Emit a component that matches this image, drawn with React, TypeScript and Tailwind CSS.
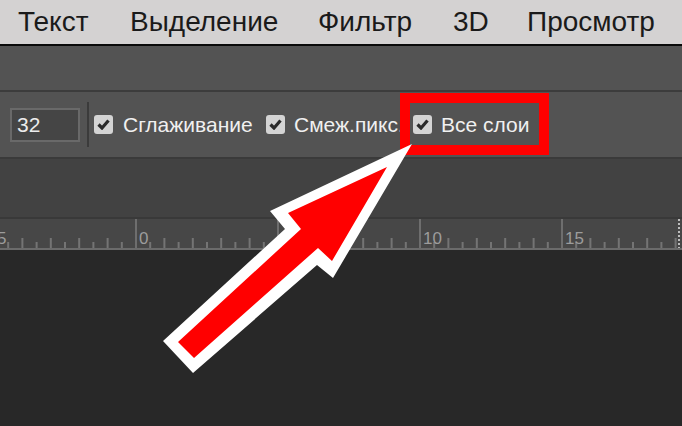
import React from 'react';

const menu = [
  { label: 'Текст', w: 'w-[112px]' },
  { label: 'Выделение', w: 'w-[188px]' },
  { label: 'Фильтр', w: 'w-[135px]' },
  { label: '3D', w: 'w-[74px]' },
  { label: 'Просмотр', w: 'w-[150px]' },
];

function Check() {
  return (
    <div className="w-[19px] h-[19px] rounded-[3px] bg-[#d4d4d4] flex items-center justify-center shrink-0">
      <svg width="13" height="11" viewBox="0 0 13 11">
        <path d="M1.5 5.5 L5 9 L11.5 1.5" fill="none" stroke="#2b2b2b" strokeWidth="3.2" strokeLinejoin="miter" />
      </svg>
    </div>
  );
}

function Ruler() {
  const majors = [-7, 135, 277, 419, 561, 703];
  const labels = ['5', '0', '5', '10', '15', ''];
  const step = 14.2;
  return (
    <svg width="682" height="29" className="block">
      {majors.map((m, k) => (
        <g key={k}>
          <rect x={m} y={0} width={2} height={29} fill="#6e6e6e" />
          {Array.from({ length: 9 }).map((_, i) => {
            const h = (i + 1) % 2 === 0 ? 10 : 6;
            return <rect key={i} x={m + step * (i + 1)} y={29 - h} width={2} height={h} fill="#747474" />;
          })}
          <text x={m + 4} y={25} fontSize="17" fill="#9c9c9c" fontFamily="Liberation Sans, Arial, sans-serif">
            {labels[k]}
          </text>
        </g>
      ))}
      <line x1="679" y1="0" x2="679" y2="29" stroke="#bdbdbd" strokeWidth="2" strokeDasharray="2 2" />
    </svg>
  );
}

export default function App() {
  return (
    <div className="relative w-[682px] h-[426px] overflow-hidden bg-[#282828] flex flex-col font-['Liberation_Sans',Arial,sans-serif]">
      {/* Menu bar */}
      <div className="h-[46px] shrink-0 bg-[#d4d2d2] border-b-2 border-[#0a0a0a] flex items-center pl-[18px] text-[28px] leading-[44px] text-[#1a1a1a] whitespace-nowrap">
        {menu.map((m) => (
          <span key={m.label} className={`${m.w} shrink-0`}>
            {m.label}
          </span>
        ))}
      </div>

      {/* Empty tab strip */}
      <div className="h-[46px] shrink-0 bg-[#535353] border-b-2 border-[#3c3c3c]" />

      {/* Options bar */}
      <div className="relative h-[67px] shrink-0 bg-[#535353] border-b-2 border-[#3a3a3a] flex items-center pl-[10px] text-[21px] text-[#f0f0f0]">
        <div className="w-[70px] h-[34px] border-2 border-[#696969] bg-[#454545] pl-[5px] flex items-center text-[#ececec]">
          32
        </div>
        <div className="ml-[7px] w-[2px] h-[45px] bg-[#3b3b3b]" />
        <div className="ml-[5px] flex items-center">
          <Check />
          <span className="ml-[10px] w-[132px] whitespace-nowrap">Сглаживание</span>
        </div>
        <div className="ml-[11px] flex items-center">
          <Check />
          <span className="ml-[9px] w-[119px] whitespace-nowrap">Смеж.пикс.</span>
        </div>
        <div className="flex items-center">
          <Check />
          <span className="ml-[9px] whitespace-nowrap">Все слои</span>
        </div>

        {/* Highlight frame */}
        <div className="absolute left-[400px] top-[1px] w-[149px] h-[62px] border-[10px] border-[#ff0000]" />
      </div>

      {/* Panel strip */}
      <div className="h-[60px] shrink-0 bg-[#424242] border-b-2 border-[#393939]" />

      {/* Ruler */}
      <div className="h-[31px] shrink-0 bg-[#474747] border-b-2 border-[#6b6b6b] overflow-hidden">
        <Ruler />
      </div>

      {/* Canvas */}
      <div className="flex-1 bg-[#282828]" />

      {/* Arrow overlay */}
      <svg className="absolute left-0 top-0 pointer-events-none" width="682" height="426">
        <polygon points="412,144 270,211 285,229 163,341 193,373 317,265 333,278" fill="#ffffff" />
        <polygon points="387,167 288,213 301,229 178,342 194,358 318,248 332,261" fill="#ff0000" />
      </svg>
    </div>
  );
}
